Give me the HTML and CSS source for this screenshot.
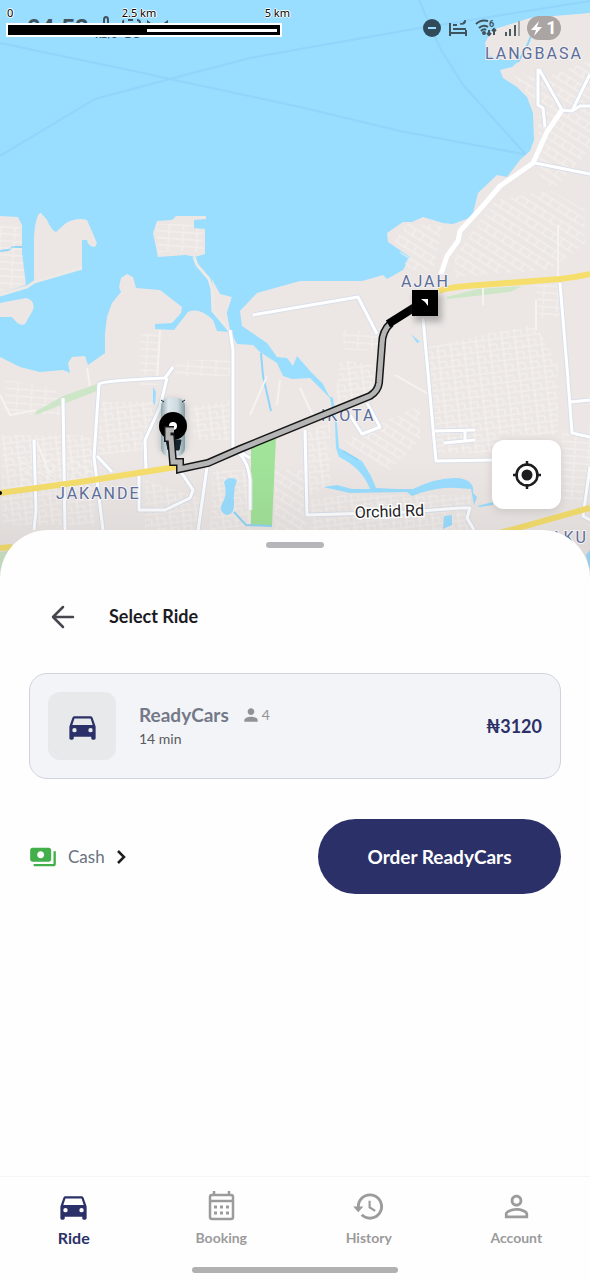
FILE: index.html
```html
<!DOCTYPE html>
<html lang="en">
<head>
<meta charset="utf-8">
<meta name="viewport" content="width=device-width, initial-scale=1">
<title>Select Ride</title>
<link rel="stylesheet" href="styles.css">
</head>
<body>
<div class="app">
  <section class="map" aria-label="Route map">
    <svg class="map-canvas" viewBox="0 0 590 584" preserveAspectRatio="xMidYMin slice" role="img" aria-label="Route from Jakande to Ajah">
      <defs>
        <pattern id="grid" width="13" height="11" patternUnits="userSpaceOnUse" patternTransform="rotate(-7)"><path class="street" d="M0 1H13M0 6H9M2 1V11M9 6V11"/></pattern>
        <pattern id="diag" width="10" height="14" patternUnits="userSpaceOnUse" patternTransform="rotate(32)"><path class="street" d="M0 2H10M0 9H10M4 2V9"/></pattern>
        <pattern id="rows" width="14" height="7" patternUnits="userSpaceOnUse" patternTransform="rotate(4)"><path class="street" d="M0 2H14M3 2V7"/></pattern>
        <linearGradient id="shade" x1="0" y1="0" x2="0" y2="1"><stop offset="0" stop-color="#555" stop-opacity="0"/><stop offset="1" stop-color="#555" stop-opacity=".13"/></linearGradient>
        <linearGradient id="carbody"><stop offset="0" stop-color="#8fa5ac"/><stop offset=".3" stop-color="#dfe9ec"/><stop offset=".7" stop-color="#cbd8dd"/><stop offset="1" stop-color="#859aa2"/></linearGradient>
        <filter id="soft" x="-50%" y="-50%" width="200%" height="200%"><feGaussianBlur stdDeviation="3"/></filter>
      </defs>
      <rect class="water" width="590" height="584"/>
      <g class="ferry">
        <path d="M0 43L143 73L170 79L300 107L400 131L528 155M0 156L95 99L170 79L250 58L300 49L420 28L590 1M419 0L440 48L463 85L528 157"/>
      </g>
      <path class="land" d="M0 357L20 367L40 372L63 370L70 373L68 363L72 357L85 356L88 365L105 353L105 333L107 317L112 303L121 292L119 287L121 278L127 274L133 277L136 288L160 290L182 307L181 313L172 323L155 324L155 329L174 330L188 312Q199 307 213 320L217 331L230 332L238 313L257 293L300 281L362 281L383 275L387 279L403 270L410 257L388 242L387 233L403 222L412 222L423 217L443 223L453 224L472 217L478 193L497 175L507 177L520 160L530 151L534 140L533 113L527 97L517 87L503 78L500 70L512 67L520 60L503 60L488 55L485 43L492 30L530 18L590 13V584H0Z"/>
      <path class="land" d="M0 216L18 217L22 225L22 253L26 285L0 294ZM0 303L26 298Q36 301 33 310L25 324Q19 327 12 317L0 317ZM34 236Q36 213 41 213L47 220Q52 231 56 232L66 223Q77 217 87 220L97 243L95 247Q88 247 87 240L82 240V268L34 283ZM157 221L172 220L176 216L206 216V219L194 220V228L205 229V254L195 257L186 255L158 257L153 233ZM212 279L220 294L232 297L227 313L231 331L214 314Z"/>
      <path class="causeway" d="M0 295L27 287L34 282L82 268M194 257L197 265L209 279L212 289L213 311L229 330"/>
      <path class="creek" d="M0 251L8 250L13 247L22 247M538 18L527 46L518 62"/>
      <g>
        <path fill="url(#rows)" d="M0 225H20L25 283L0 291ZM156 224H193V229H203V252H158Z"/>
        <path fill="url(#diag)" d="M395 240L408 224L442 225L434 270H408ZM455 257L495 200L550 190L585 210V245L548 270L455 277ZM510 70L540 80L590 60V150L553 190L535 170L540 110Z"/>
        <path fill="url(#grid)" d="M428 347L535 324L558 365V435H500V453H437ZM2 435H95V525H2ZM100 402H157L145 450L98 455ZM190 408L230 400V440H195ZM145 480L205 500L195 545L145 540ZM213 470L250 470V530H210ZM307 432L330 422V485L310 495ZM340 360L374 365V390L335 405ZM345 495H470V550H310V500Z"/>
        <path fill="url(#rows)" d="M140 335L158 330V385H140ZM175 360H230V376H175ZM342 330H378V350H345ZM535 285H560V318H540ZM562 430H590V500H562ZM5 380L55 388L60 415H5Z"/>
        <path fill="url(#diag)" d="M345 440L420 405V440L390 470L355 450ZM20 460H97V490H20ZM275 470H307V550H275Z"/>
      </g>
      <path class="park" d="M35 412L63 396L100 383L97 391L66 403L36 415ZM446 297L478 289L522 286L510 292L484 295L448 299ZM0 552L14 550L8 584H0Z"/>
      <path class="forest" d="M251 446L276 437L272 526H251Z"/>
      <path class="water" d="M232 297L237 303L240 311L242 326L267 343L277 357L287 358L293 366L297 356L310 371L323 384L329 396L333 398L337 424L339 448L362 461L371 476L376 488L397 489L413 489Q437 477 458 478Q475 480 473 493L477 497L474 505L471 489L457 488Q440 487 420 493L412 496L407 492L350 493L323 487L337 485L352 489H370Q362 468 339 457L336 448L335 424L330 398L318 386L310 378L292 379L283 376L277 363L260 352L253 345L237 344L230 330L227 313Z"/>
      <path class="water" d="M411 334L420 342L417 343ZM444 516L452 515V525L443 529ZM224 482Q229 475 237 480Q233 490 234 501Q235 514 227 515Q218 512 222 504Q228 494 224 482ZM477 506L493 502V505L480 507ZM153 387L156 392L155 405L153 403ZM586 555L590 550V570Z"/>
      <path class="creek" d="M261 353L263 376L271 411M234 512L246 525L272 526M343 451L358 460"/>
      <path class="minor" d="M160 330L157 380M87 368L90 386M0 395L10 415L36 410M36 440L50 475M558 225V282M483 287V305M267 376L250 415M280 380L277 405M536 330V300M395 375L430 395M300 388L315 420"/>
      <path class="road-edge" d="M253 315L358 297L377 334M230 330L233 350V448M233 448Q248 458 250 480V510M233 448L250 458M99 384Q99 381 165 378L173 367M167 378L160 407L145 440L146 470M99 384L94 457L103 530M63 398L65 530M34 440L36 510L34 530M97 456L112 472M139 476V510H165L190 498L193 490L181 472M208 460L198 531M423 318L436 461L495 460M305 430L307 515L407 512L460 508H470L467 518L474 530M350 415L362 434L380 427L367 403M435 431L475 430M444 443L475 440M465 430V441M560 283L568 380L572 433L590 437M570 402L590 400M590 467L583 516L590 520M441 274L447 256L458 241L460 231L482 207L500 186L533 163L547 132L562 110L539 69M562 110L572 111L590 74M572 111L580 106H590M545 127L543 108L538 105V69M535 163L590 174"/>
      <path class="road" d="M253 315L358 297L377 334M230 330L233 350V448M233 448Q248 458 250 480V510M233 448L250 458M99 384Q99 381 165 378L173 367M167 378L160 407L145 440L146 470M99 384L94 457L103 530M63 398L65 530M34 440L36 510L34 530M97 456L112 472M139 476V510H165L190 498L193 490L181 472M208 460L198 531M423 318L436 461L495 460M305 430L307 515L407 512L460 508H470L467 518L474 530M350 415L362 434L380 427L367 403M435 431L475 430M444 443L475 440M465 430V441M560 283L568 380L572 433L590 437M570 402L590 400M590 467L583 516L590 520M562 110L539 69M562 110L572 111L590 74M572 111L580 106H590M545 127L543 108L538 105V69M535 163L590 174"/>
      <path class="road main-road" d="M441 274L447 256L458 241L460 231L482 207L500 186L533 163L547 132L562 110"/>
      <path class="highway" d="M0 493L80 482L176 467M439 291Q448 287 480 285L560 279Q577 277 590 274M500 533L590 508M0 548L12 547"/>
      <rect y="460" width="590" height="124" fill="url(#shade)"/>
      <circle cx="0" cy="493" r="2"/>
      <g class="place">
        <text x="485" y="59">LANGBASA</text>
        <text x="401" y="287">AJAH</text>
        <text x="321" y="421">IKOTA</text>
        <text x="56" y="499">JAKANDE</text>
        <text x="551" y="543">AKU</text>
      </g>
      <text class="road-name" x="355" y="518" transform="rotate(-2 355 518)">Orchid Rd</text>
      <g>
        <rect x="159" y="399" width="28" height="56" rx="10" fill="#44606c" opacity=".25" filter="url(#soft)"/>
        <rect x="161" y="398" width="24" height="58" rx="8" fill="url(#carbody)"/>
        <path d="M161 400L164 402M185 400L182 402M166 440H181L179 450H168Z" fill="#17232d" stroke="#17232d"/>
        <circle cx="173" cy="426" r="14"/>
        <circle cx="173" cy="426" r="4" fill="#fff"/>
        <path d="M174 430H168V438H171L173 462H180V469L208 463L240 449L370 396Q378 391 379 383L382 344Q382 331 391 323" class="route-case"/>
        <path d="M174 430H168V438H171L173 462H180V469L208 463L240 449L370 396Q378 391 379 383L382 344Q382 331 391 323" class="route-fill"/>
        <path class="route-end" d="M388 324L423 302"/>
      </g>
      <rect x="414" y="294" width="28" height="28" fill="#777" opacity=".5" filter="url(#soft)"/>
      <rect x="412" y="290" width="26" height="26"/>
      <path fill="#fff" d="M421 299H428V306L425 302Z"/>
    </svg>

    <div class="status">
      <span class="clock">04:52</span>
      <span class="speed"><svg width="10" height="14" viewBox="0 0 10 14" class="line-icon"><path d="M3 12V4Q3 1 5 1T7 4V12"/></svg><span>KB/s</span></span>
      <svg class="line-icon mail" width="66" height="22" viewBox="0 0 66 22"><path stroke-dasharray="5 4" d="M2 8V5Q2 3 5 3H16Q19 3 19 6V17Q19 20 16 20H5Q2 20 2 16V8"/><path d="M8 8H14M27 18V5L36 12L46 5V18H42L37 11L31 18Z"/><circle cx="62" cy="12" r="2" fill="currentColor"/></svg>
      <span class="status-icons">
        <svg width="18" height="18" viewBox="0 0 18 18"><circle cx="9" cy="9" r="9" fill="#314b5a"/><path d="M5 9H13" stroke="#9bdfff" stroke-width="2"/></svg>
        <svg class="line-icon" width="20" height="18" viewBox="0 0 20 18"><path d="M2 4V17M2 14H18M18 17V11M5 10H18M5 6H9"/><path d="M17 1Q19 6 12 5Q16 5 17 1Z" fill="currentColor" stroke-width="1"/></svg>
        <svg class="line-icon" width="22" height="18" viewBox="0 0 22 18"><path d="M1 5Q6 0 13 2M4 9Q8 5 13 8M6 12Q9 9 11 11M14 11V16M12 14L14 16L16 14M19 16V10M17 12L19 10L21 12"/><circle cx="9" cy="14" r="1"/><text x="14" y="8" class="tiny">6</text></svg>
        <svg width="16" height="18" viewBox="0 0 16 18"><path d="M2 17V13M6 17V10M11 17V6" stroke="#4d5960" stroke-width="2"/><path d="M15 17V2" stroke="#aaa9a9" stroke-width="2"/></svg>
        <span class="battery"><svg width="11" height="15" viewBox="0 0 11 15"><path fill="#fff" d="M8 0L0 9H5L3 15L11 6H6Z"/></svg>1</span>
      </span>
    </div>
    <div class="scale">
      <div class="scale-labels"><span>0</span><span>2.5 km</span><span>5 km</span></div>
      <div class="scale-bar"><i></i></div>
    </div>
    <button class="locate" aria-label="My location">
      <svg width="30" height="30" viewBox="0 0 30 30"><circle cx="15" cy="15" r="5.500" fill="#1d1d1f"/><circle cx="15" cy="15" r="10.500" fill="none" stroke="#1d1d1f" stroke-width="2.500"/><path d="M15 1V6M15 24V29M1 15H6M24 15H29" stroke="#1d1d1f" stroke-width="2.500"/></svg>
    </button>
  </section>

  <main class="sheet">
    <div class="handle"></div>
    <header class="sheet-head">
      <button class="back" aria-label="Back"><svg width="24" height="24" viewBox="0 0 24 24"><path d="M22 12H2M12 2L2 12L12 22" fill="none" stroke="#47464e" stroke-width="2.500" stroke-linecap="round" stroke-linejoin="round"/></svg></button>
      <h1>Select Ride</h1>
    </header>
    <button class="ride">
      <span class="tile"><svg width="35" height="35" viewBox="0 0 24 24"><path class="car" d="M18.920 6.010C18.720 5.420 18.160 5 17.500 5h-11c-.66 0-1.210.42-1.420 1.010L3 12v8c0 .55.45 1 1 1h1c.55 0 1-.45 1-1v-1h12v1c0 .55.45 1 1 1h1c.55 0 1-.45 1-1v-8zM6.500 16a1.500 1.500 0 1 1 0-3 1.500 1.500 0 0 1 0 3zm11 0a1.500 1.500 0 1 1 0-3 1.500 1.500 0 0 1 0 3zM5 11l1.500-4.500h11L19 11z"/></svg></span>
      <span class="ride-info">
        <span class="ride-name">ReadyCars <span class="seats"><svg width="20" height="20" viewBox="0 0 24 24"><path fill="currentColor" d="M12 12c2.210 0 4-1.790 4-4s-1.790-4-4-4-4 1.790-4 4 1.790 4 4 4zm0 2c-2.670 0-8 1.340-8 4v2h16v-2c0-2.660-5.330-4-8-4z"/></svg>4</span></span>
        <span class="eta">14 min</span>
      </span>
      <span class="price">₦3120</span>
    </button>
    <div class="checkout">
      <button class="pay">
        <svg width="28" height="28" viewBox="0 0 24 24"><path fill="#43af4a" d="M19 14V6c0-1.100-.9-2-2-2H3c-1.100 0-2 .9-2 2v8c0 1.100.9 2 2 2h14c1.100 0 2-.9 2-2zm-9-1c-1.660 0-3-1.340-3-3s1.340-3 3-3 3 1.340 3 3-1.340 3-3 3zm13-6v11c0 1.100-.9 2-2 2H4v-2h17V7z"/></svg>
        <span>Cash</span>
        <svg width="10" height="14" viewBox="0 0 10 14"><path d="M2 1L8 7L2 13" fill="none" stroke="#1d1d1f" stroke-width="2.500"/></svg>
      </button>
      <button class="order">Order ReadyCars</button>
    </div>
  </main>

  <nav class="tabs">
    <a class="tab active" href="#ride"><svg width="35" height="35" viewBox="0 0 24 24"><path class="car" d="M18.920 6.010C18.720 5.420 18.160 5 17.500 5h-11c-.66 0-1.210.42-1.420 1.010L3 12v8c0 .55.45 1 1 1h1c.55 0 1-.45 1-1v-1h12v1c0 .55.45 1 1 1h1c.55 0 1-.45 1-1v-8zM6.500 16a1.500 1.500 0 1 1 0-3 1.500 1.500 0 0 1 0 3zm11 0a1.500 1.500 0 1 1 0-3 1.500 1.500 0 0 1 0 3zM5 11l1.500-4.500h11L19 11z"/></svg><span>Ride</span></a>
    <a class="tab" href="#booking"><svg width="35" height="35" viewBox="0 0 35 35" fill="none" stroke="currentColor" stroke-width="2.500"><rect x="6" y="6" width="23" height="24" rx="2"/><path d="M6 12H29M10 2V6M25 2V6"/><path stroke-width="3" d="M10 18h3M16 18h3M22 18h3M10 24h3M16 24h3M22 24h3"/></svg><span>Booking</span></a>
    <a class="tab" href="#history"><svg width="35" height="35" viewBox="0 0 24 24"><path fill="currentColor" d="M13 3c-4.970 0-9 4.030-9 9H1.500l3.500 4L8.500 12H6c0-3.870 3.130-7 7-7s7 3.130 7 7-3.130 7-7 7c-1.930 0-3.680-.79-4.940-2.060l-1.420 1.420C8.270 19.990 10.510 21 13 21c4.970 0 9-4.030 9-9s-4.030-9-9-9zm-1 5v5l4.280 2.540.72-1.210-3.500-2.080V8z"/></svg><span>History</span></a>
    <a class="tab" href="#account"><svg width="35" height="35" viewBox="0 0 24 24"><path fill="currentColor" d="M12 5.900c1.160 0 2.100.94 2.100 2.100s-.94 2.100-2.100 2.100S9.900 9.160 9.900 8s.94-2.100 2.100-2.100m0 9c2.970 0 6.100 1.460 6.100 2.100v1.100H5.900V17c0-.64 3.130-2.100 6.100-2.100M12 4C9.790 4 8 5.790 8 8s1.790 4 4 4 4-1.790 4-4-1.790-4-4-4zm0 9c-2.670 0-8 1.340-8 4v3h16v-3c0-2.660-5.330-4-8-4z"/></svg><span>Account</span></a>
  </nav>
  <div class="home-bar"></div>
</div>
</body>
</html>
```
FILE: styles.css
```css
* { box-sizing: border-box; }
body { margin: 0; background: #fefefe; font-family: Lato, "Noto Sans", sans-serif; color: #1b1b1f; }
button { font: inherit; color: inherit; border: 0; background: none; padding: 0; cursor: pointer; }
svg { display: block; flex: none; }
.app { display: flex; flex-direction: column; min-height: 100vh; }

.map { position: relative; overflow: hidden; }
.map-canvas { width: 100%; height: auto; }
.water { fill: #99ddff; }
.land { fill: #ece7e5; }
.ferry { fill: none; stroke: #91d5fb; stroke-width: 2; }
.causeway { fill: none; stroke: #ede9e6; stroke-width: 3; }
.creek { fill: none; stroke: #8fd5f8; stroke-width: 2; }
.park { fill: #cde6c8; }
.forest { fill: #a1e399; }
.street { fill: none; stroke: #f5f2f0; stroke-width: 1; }
.minor { fill: none; stroke: #f5f2f0; stroke-width: 2; }
.road-edge { fill: none; stroke: #d9dfea; stroke-width: 5; stroke-linejoin: round; }
.road { fill: none; stroke: #fff; stroke-width: 3; stroke-linejoin: round; }
.main-road { stroke-width: 5; }
.highway { fill: none; stroke: #f5de6b; stroke-width: 6; }
.route-case { fill: none; stroke: #171717; stroke-width: 8; }
.route-fill { fill: none; stroke: #b5b5b5; stroke-width: 5; }
.route-end { fill: none; stroke: #000; stroke-width: 8; }
.place { font: 16px Roboto, sans-serif; letter-spacing: 2px; fill: #5b6d9b; stroke: #f4f1f0; stroke-width: 2; paint-order: stroke; }
.road-name { font: 16px Roboto, sans-serif; fill: #222; stroke: #fff; stroke-width: 3; paint-order: stroke; }

.status { position: absolute; top: 16px; left: 27px; right: 29px; display: flex; align-items: center; color: #40535d; }
.clock { font: 700 24px/24px Roboto, sans-serif; width: 68px; }
.speed { display: flex; flex-direction: column; align-items: center; width: 22px; font: 700 10px/10px Roboto, sans-serif; }
.mail { margin-left: 4px; }
.line-icon { fill: none; stroke: currentColor; stroke-width: 2; }
.tiny { font: 700 9px Roboto, sans-serif; fill: currentColor; stroke: none; }
.status-icons { display: flex; align-items: center; gap: 7px; margin-left: auto; }
.battery { display: flex; align-items: center; justify-content: center; gap: 4px; width: 34px; height: 24px; border-radius: 12px; background: #aaa5a3; color: #fff; font: 700 18px/24px Roboto, sans-serif; }
.scale { position: absolute; top: 6px; left: 6px; width: 276px; }
.scale-labels { display: flex; justify-content: space-between; margin-right: -8px; font: 11px/14px "Noto Sans", sans-serif; color: #000; text-shadow: 1px 0 #fff, -1px 0 #fff, 0 1px #fff, 0 -1px #fff; padding-left: 1px; }
.scale-bar { display: flex; justify-content: flex-end; height: 14px; margin-top: 3px; border: 2px solid #fff; background: #000; padding: 4px 3px 3px; }
.scale-bar i { width: 49%; background: #fff; }
.locate { position: absolute; right: 29px; bottom: 75px; display: grid; place-items: center; width: 69px; height: 69px; border-radius: 12px; background: #fff; box-shadow: 0 2px 10px rgba(0, 0, 0, .12); }

.sheet { position: relative; flex: 1; margin-top: -54px; padding: 12px 29px 24px; border-radius: 48px 48px 0 0; background: #fefefe; }
.handle { width: 58px; height: 6px; margin: 0 auto; border-radius: 3px; background: #b6b5b9; }
.sheet-head { display: flex; align-items: center; gap: 34px; padding: 56px 22px 44px; }
h1 { margin: 0; font-size: 18px; line-height: 25px; font-weight: 700; }
.ride { display: flex; align-items: center; width: 100%; padding: 18px; border: 1px solid #d0d3de; border-radius: 18px; background: #f3f4f7; text-align: left; }
.tile { display: grid; place-items: center; width: 68px; height: 68px; border-radius: 12px; background: #e8e9eb; }
.car { fill: #2b3168; }
.ride-info { display: flex; flex-direction: column; margin-left: 23px; }
.ride-name { display: flex; align-items: center; gap: 12px; font-size: 19px; line-height: 26px; font-weight: 700; color: #737988; }
.seats { display: flex; align-items: center; gap: 1px; font-size: 14px; font-weight: 400; color: #929295; }
.eta { font-size: 14px; line-height: 22px; color: #59595d; }
.price { margin-left: auto; font-size: 18px; font-weight: 700; color: #2b3168; }
.checkout { display: flex; align-items: center; justify-content: space-between; margin-top: 40px; }
.pay { display: flex; align-items: center; gap: 11px; font-size: 17px; color: #6b7280; }
.order { width: 243px; height: 75px; border-radius: 38px; background: #2b3168; color: #fff; font-size: 19px; font-weight: 700; }

.tabs { display: grid; grid-template-columns: repeat(4, 1fr); padding-top: 12px; border-top: 1px solid #f5f5f6; }
.tab { display: flex; flex-direction: column; align-items: center; gap: 4px; color: #9b9b9b; font-size: 14px; line-height: 20px; font-weight: 700; text-decoration: none; }
.active { color: #2b3168; font-size: 16px; }
.home-bar { width: 206px; height: 6px; margin: 19px auto 7px; border-radius: 3px; background: #b1b1b1; }
```
